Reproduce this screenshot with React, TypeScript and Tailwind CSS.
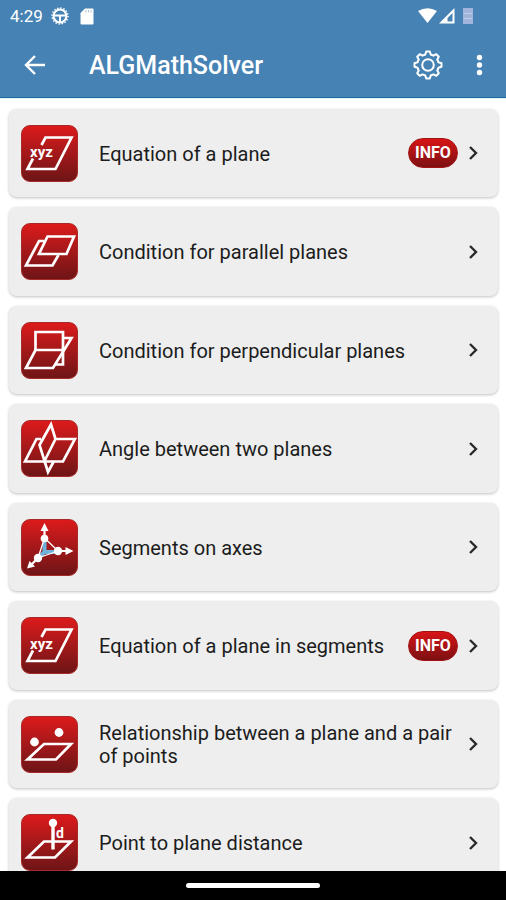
import type { ReactElement, ReactNode } from 'react';

type Row = {
	title: string;
	href: string;
	icon: ReactNode;
	info?: boolean;
};

const xyzDrawing = (
	<>
		<path d="M20.5 20 L24.5 12.5 H50.5 L34.5 44 H6.5 L12 33.5" />
		<text
			x="9"
			y="31.5"
			fontSize="15"
			fontWeight="700"
			fill="white"
			stroke="none"
		>
			xyz
		</text>
	</>
);

const rows: Row[] = [
	{
		title: 'Equation of a plane',
		href: '#plane',
		icon: xyzDrawing,
		info: true,
	},
	{
		title: 'Condition for parallel planes',
		href: '#parallel',
		icon: (
			<>
				<path d="M26.5 13.5 H53 L45.5 31 H18 Z" />
				<path d="M23.5 18 H18 L5 42.5 H31.5 L37.5 32" />
			</>
		),
	},
	{
		title: 'Condition for perpendicular planes',
		href: '#perpendicular',
		icon: (
			<>
				<path d="M14.5 28 V10 H42 V42.5 H35" />
				<path d="M43 16 H50.5 L32 46 H5 L14.5 28 H42" />
			</>
		),
	},
	{
		title: 'Angle between two planes',
		href: '#angle',
		icon: (
			<>
				<path d="M34.5 19 L30 4.5 L18.5 25 L23.5 41 L34.5 19 H54 L42 41.5 H4 L15.5 19 H20" />
				<path d="M23.5 41 L27 52 L33 41" />
			</>
		),
	},
	{
		title: 'Segments on axes',
		href: '#segments',
		icon: (
			<>
				<path
					d="M23.5 20 V33 H37 M23.5 33 L17 39"
					stroke="#6cb2da"
					strokeWidth="4"
				/>
				<path d="M23.5 19 L37 32 M37 32 L17 39 M17 39 L23.5 19" strokeWidth="1.3" />
				<path d="M23.5 19 V8 M37 32 H48 M17 39 L10 46" strokeWidth="2.2" />
				<g fill="white" stroke="none">
					<circle cx="23.5" cy="19.5" r="3.8" />
					<circle cx="37" cy="32" r="4.2" />
					<circle cx="17" cy="39" r="4.2" />
					<path d="M23.5 4 L27.5 12 H19.5 Z M52.5 32 L44.5 28 V36 Z M6 49.500 L8.5 42 L14 47.5 Z" />
				</g>
			</>
		),
	},
	{
		title: 'Equation of a plane in segments',
		href: '#plane-segments',
		icon: xyzDrawing,
		info: true,
	},
	{
		title: 'Relationship between a plane and a pair of points',
		href: '#pair',
		icon: (
			<>
				<path d="M23 28 H50 L35 43.5 H6.5 Z" />
				<circle cx="38" cy="16.5" r="4.4" fill="white" stroke="none" />
				<circle cx="13.5" cy="26" r="4.4" fill="white" stroke="none" />
			</>
		),
	},
	{
		title: 'Point to plane distance',
		href: '#distance',
		icon: (
			<>
				<path d="M23 27.5 H50 L34 43.5 H6.5 Z" />
				<path d="M32 9 V35.5" strokeWidth="3.4" />
				<circle cx="32" cy="9" r="4.2" fill="white" stroke="none" />
				<text
					x="35"
					y="23.5"
					fontSize="14"
					fontWeight="700"
					fill="white"
					stroke="none"
				>
					d
				</text>
			</>
		),
	},
];

function Tile({ children }: { children: ReactNode }): ReactElement {
	return (
		<span className="size-[57px] shrink-0 overflow-hidden rounded-[9px] border border-[#a82a28] bg-linear-to-b from-[#dc1a1b] to-[#6f1416]">
			<svg
				viewBox="1 1 55 55"
				className="size-full"
				fill="none"
				stroke="white"
				strokeWidth="2.7"
				aria-hidden="true"
			>
				{children}
			</svg>
		</span>
	);
}

function ListRow({ title, href, icon, info }: Row): ReactElement {
	return (
		<li className="flex min-h-[88px] items-center rounded-lg bg-[#eeeeee] px-3 shadow-[0_1px_3px_rgba(0,0,0,0.25)] even:min-h-[89px]">
			<a href={href} className="flex min-w-0 flex-1 items-center gap-[21px]">
				<Tile>{icon}</Tile>
				<span className="min-w-0 flex-1 pt-0.5 text-xl leading-[23px] text-[#1c1c1c]">
					{title}
				</span>
			</a>
			{info && (
				<button
					type="button"
					className="h-[30px] w-[50px] shrink-0 rounded-full border border-[#a31315] bg-linear-to-b from-[#d81416] to-[#7d1012] text-base leading-none font-bold text-white"
				>
					INFO
				</button>
			)}
			<svg
				viewBox="0 0 24 24"
				className="mr-px ml-[3px] size-6 shrink-0"
				fill="none"
				stroke="#2b2b2b"
				strokeWidth="2.4"
				aria-hidden="true"
			>
				<path d="M9 6 L15 12 L9 18" />
			</svg>
		</li>
	);
}

// Outline of an eight-tooth cog centred on 0,0
function cogPath(): string {
	const points: string[] = [];
	for (let i = 0; i < 8; i++) {
		const mid = (i * Math.PI) / 4;
		for (const [offset, radius] of [
			[-0.25, 10.8],
			[-0.13, 13.6],
			[0.13, 13.6],
			[0.25, 10.8],
		]) {
			const x = radius * Math.sin(mid + offset);
			const y = -radius * Math.cos(mid + offset);
			points.push(`${x.toFixed(1)} ${y.toFixed(1)}`);
		}
	}
	return `M${points.join(' L')} Z`;
}

function StatusBar(): ReactElement {
	return (
		<div className="flex h-8 items-center px-[10px] text-white">
			<span className="text-[17px] leading-5">4:29</span>
			<svg
				viewBox="0 0 18 18"
				className="ml-2 size-[18px]"
				fill="none"
				stroke="white"
				aria-hidden="true"
			>
				<circle cx="9" cy="9" r="6.4" strokeWidth="2" />
				<circle cx="9" cy="9" r="8" strokeWidth="1.4" strokeDasharray="1.5 1.64" />
				<path d="M3 8.5 H15 M9 9 V15" strokeWidth="2" />
			</svg>
			<svg
				viewBox="0 0 14 17"
				className="ml-[11px] h-[17px] w-[14px]"
				aria-hidden="true"
			>
				<path
					d="M5 0.5 H12.5 Q13.5 0.5 13.5 1.5 V15.5 Q13.5 16.5 12.5 16.5 H1.5 Q0.5 16.5 0.5 15.5 V5 Z"
					fill="white"
				/>
				<path d="M6 2 V4.5 M8.5 2 V4.5 M11 2 V4.5" stroke="#a9c4dc" />
			</svg>
			<svg
				viewBox="0 0 56 18"
				className="mr-[23px] ml-auto h-[18px] w-14"
				aria-hidden="true"
			>
				<path d="M1 4 Q10.5 -1.5 20 4 L10.5 16 Z" fill="white" />
				<path d="M37.5 1 V16.5 H22 Z" fill="white" />
				<path d="M35.5 6 V14.5 H30.5 V11 Z" fill="#4682b4" />
				<path d="M46 1 H56 V17 H46 Z" fill="#a3b4dc" />
				<path d="M47 6.5 H55 M47 11.5 H55" stroke="#bccbe6" />
			</svg>
		</div>
	);
}

export default function App(): ReactElement {
	return (
		<div className="flex h-screen flex-col overflow-hidden bg-white font-['Roboto',sans-serif]">
			<header className="shrink-0 border-b border-[#1c679f] bg-[#4682b4]">
				<StatusBar />
				<div className="flex h-[65px] items-center pl-6 text-white">
					<button type="button" aria-label="Back">
						<svg
							viewBox="0 0 22 22"
							className="size-[22px]"
							fill="none"
							stroke="white"
							strokeWidth="2.4"
						>
							<path d="M21 11 H2.5 M11 2 L2 11 L11 20" />
						</svg>
					</button>
					<h1 className="ml-[43px] flex-1 pt-0.5 text-[25px] leading-8 font-medium">
						ALGMathSolver
					</h1>
					<button type="button" aria-label="Settings">
						<svg
							viewBox="-15 -15 30 30"
							className="size-[30px]"
							fill="none"
							stroke="white"
							strokeWidth="2"
							strokeLinejoin="round"
						>
							<path d={cogPath()} />
							<circle r="5.8" />
						</svg>
					</button>
					<button
						type="button"
						aria-label="More options"
						className="mr-[15px] ml-[25px]"
					>
						<svg viewBox="0 0 23 24" className="h-6 w-[23px]" fill="white">
							<circle cx="11.5" cy="4.5" r="2.7" />
							<circle cx="11.5" cy="12" r="2.7" />
							<circle cx="11.5" cy="19.5" r="2.7" />
						</svg>
					</button>
				</div>
			</header>
			<main className="min-h-0 flex-1 overflow-hidden border-t border-[#dff4fb]">
				<ul className="flex flex-col gap-[10px] pt-[10px] pr-2 pl-[9px]">
					{rows.map((row) => (
						<ListRow key={row.href} {...row} />
					))}
				</ul>
			</main>
			<footer className="flex h-[29px] shrink-0 items-center justify-center bg-black">
				<div className="h-[5px] w-[134px] rounded-full bg-white" />
			</footer>
		</div>
	);
}
